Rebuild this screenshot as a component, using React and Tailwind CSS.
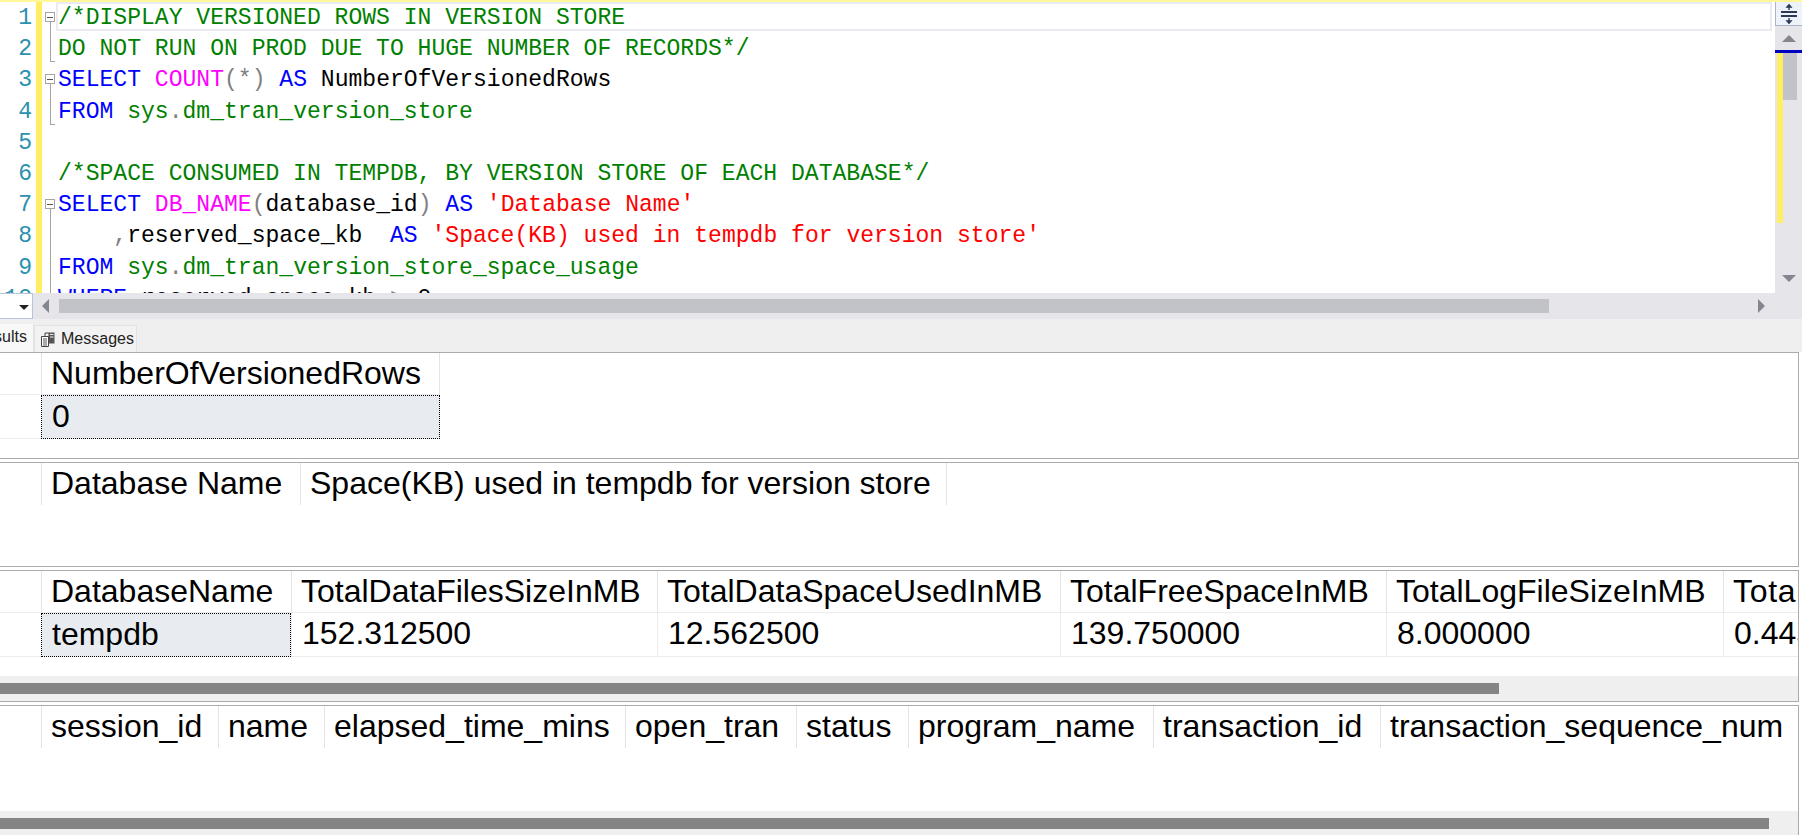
const kw = "text-[#0000ff]";
const cm = "text-[#008000]";
const fn = "text-[#ff00ff]";
const st = "text-[#ff0000]";
const gr = "text-[#808080]";
const bk = "text-black";

const lines = [
  { fold: "box", parts: [["/*DISPLAY VERSIONED ROWS IN VERSION STORE", cm]] },
  { fold: "end", parts: [["DO NOT RUN ON PROD DUE TO HUGE NUMBER OF RECORDS*/", cm]] },
  { fold: "box", parts: [["SELECT", kw], [" ", bk], ["COUNT", fn], ["(*)", gr], [" ", bk], ["AS", kw], [" NumberOfVersionedRows", bk]] },
  { fold: "end", parts: [["FROM", kw], [" ", bk], ["sys", cm], [".", gr], ["dm_tran_version_store", cm]] },
  { fold: null, parts: [] },
  { fold: null, parts: [["/*SPACE CONSUMED IN TEMPDB, BY VERSION STORE OF EACH DATABASE*/", cm]] },
  { fold: "box", parts: [["SELECT", kw], [" ", bk], ["DB_NAME", fn], ["(", gr], ["database_id", bk], [")", gr], [" ", bk], ["AS", kw], [" ", bk], ["'Database Name'", st]] },
  { fold: "line", parts: [["    ", bk], [",", gr], ["reserved_space_kb  ", bk], ["AS", kw], [" ", bk], ["'Space(KB) used in tempdb for version store'", st]] },
  { fold: "line", parts: [["FROM", kw], [" ", bk], ["sys", cm], [".", gr], ["dm_tran_version_store_space_usage", cm]] },
  { fold: "line", parts: [["WHERE", kw], [" reserved_space_kb ", bk], [">", gr], [" 0", bk]] },
];

const panels = [
  {
    h: "h-[107px]",
    cols: [["NumberOfVersionedRows", "w-[399px]"]],
    row: ["0"],
    closed: true,
  },
  {
    h: "h-[105px]",
    cols: [["Database Name", "w-[259px]"], ["Space(KB) used in tempdb for version store", "w-[647px]"]],
    closed: true,
  },
  {
    h: "h-[132px]",
    cols: [
      ["DatabaseName", "w-[250px]"],
      ["TotalDataFilesSizeInMB", "w-[366px]"],
      ["TotalDataSpaceUsedInMB", "w-[403px]"],
      ["TotalFreeSpaceInMB", "w-[326px]"],
      ["TotalLogFileSizeInMB", "w-[337px]"],
      ["TotalLogSpaceUsedInMB", "w-[75px] tracking-[0.7px]"],
    ],
    row: ["tempdb", "152.312500", "12.562500", "139.750000", "8.000000", "0.445312"],
    thumb: "w-[1499px]",
  },
  {
    h: "h-[130px]",
    cols: [
      ["session_id", "w-[177px]"],
      ["name", "w-[106px]"],
      ["elapsed_time_mins", "w-[301px]"],
      ["open_tran", "w-[171px]"],
      ["status", "w-[112px]"],
      ["program_name", "w-[245px]"],
      ["transaction_id", "w-[227px]"],
      ["transaction_sequence_num", "w-[418px]"],
    ],
    thumb: "w-[1769px]",
    last: true,
  },
];

function FoldCell({ type }) {
  if (type === "box") {
    return (
      <div className="relative h-full w-[14px] shrink-0">
        <div className="absolute left-[8px] top-[20px] bottom-0 w-px bg-[#a5a5a5]" />
        <div className="absolute left-[3px] top-[10px] flex h-[10px] w-[10px] items-center justify-center border border-[#a5a5a5] bg-white">
          <div className="h-px w-[6px] bg-[#555555]" />
        </div>
      </div>
    );
  }
  if (type === "end") {
    return (
      <div className="relative h-full w-[14px] shrink-0">
        <div className="absolute left-[8px] top-0 bottom-[2px] w-px bg-[#a5a5a5]" />
        <div className="absolute left-[8px] bottom-[2px] h-px w-[5px] bg-[#a5a5a5]" />
      </div>
    );
  }
  if (type === "line") {
    return (
      <div className="relative h-full w-[14px] shrink-0">
        <div className="absolute left-[8px] top-0 bottom-0 w-px bg-[#a5a5a5]" />
      </div>
    );
  }
  return <div className="w-[14px] shrink-0" />;
}

function Editor() {
  return (
    <div>
      <div className="h-[2px] bg-[#fff799]" />
      <div className="flex h-[291px] overflow-hidden">
        <div className="min-w-0 flex-1 overflow-hidden">
          {lines.map((line, i) => (
            <div key={i} className="flex h-[31.2px] items-stretch">
              <div className="w-[36px] shrink-0 pr-[4px] text-right text-[#2b91af]">{i + 1}</div>
              <div className="w-[6px] shrink-0 bg-[#ffee62]" />
              <FoldCell type={line.fold} />
              <div className={`min-w-0 flex-1 whitespace-pre ${i === 0 ? "mb-[2px] mr-[3px] border-2 border-[#eaeaf2] leading-[28px]" : "pl-[2px]"}`}>
                {line.parts.map(([text, color], j) => (
                  <span key={j} className={color}>{text}</span>
                ))}
              </div>
            </div>
          ))}
        </div>
        <div className="flex w-[27px] shrink-0 flex-col bg-[#e6e6ea]">
          <div className="flex h-[24px] items-center justify-center border-b border-l border-[#a9b4c6] bg-[#eef3fb]">
            <svg width="18" height="22" viewBox="0 0 18 22" fill="none" stroke="#2b3a55">
              <path d="M1 9h16M1 13h16" strokeWidth="1.8" />
              <path d="M9 2v5M9 15v5" strokeWidth="1.4" />
              <path d="M6 4.5 9 1l3 3.5zM6 17.500 9 21l3-3.500z" fill="#2b3a55" strokeWidth="0.6" />
            </svg>
          </div>
          <div className="flex h-[24px] items-center justify-center">
            <div className="h-0 w-0 border-x-[7px] border-b-[7px] border-x-transparent border-b-[#85858f]" />
          </div>
          <div className="h-[3px] bg-[#0000c0]" />
          <div className="flex h-[170px] pl-[2px]">
            <div className="w-[6px] bg-[#ffee62]" />
            <div className="h-[47px] w-[14px] bg-[#c2c3c9]" />
          </div>
          <div className="flex flex-1 items-end justify-center pb-[11px]">
            <div className="h-0 w-0 border-x-[7px] border-t-[7px] border-x-transparent border-t-[#85858f]" />
          </div>
        </div>
      </div>
    </div>
  );
}

function HScroll() {
  return (
    <div className="flex h-[26px] items-center bg-[#e6e6ea]">
      <div className="flex h-full w-[33px] shrink-0 items-center justify-end border-t border-r border-b border-[#b8c4dd] bg-white pr-[3px] pt-[2px]">
        <div className="h-0 w-0 border-x-[5px] border-t-[5px] border-x-transparent border-t-[#222222]" />
      </div>
      <div className="ml-[9px] h-0 w-0 border-y-[7px] border-r-[7px] border-y-transparent border-r-[#85858f]" />
      <div className="ml-[10px] h-[14px] w-[1490px] bg-[#c2c3c9]" />
      <div className="ml-[209px] h-0 w-0 border-y-[7px] border-l-[7px] border-y-transparent border-l-[#85858f]" />
    </div>
  );
}

function Tabs() {
  return (
    <div className="flex h-[33px] items-end bg-[#efefef] text-[16px] text-[#222222]">
      <div className="flex h-[28px] w-[34px] justify-end overflow-hidden border-r border-[#e2e2e2] bg-[#f8f8f8] pr-[6px] pt-[1px]">
        <span>sults</span>
      </div>
      <div className="flex h-[27px] w-[103px] items-center gap-[6px] border-x border-t border-[#e2e2e2] bg-[#f2f2f2] pl-[5px]">
        <svg width="15" height="15" viewBox="0 0 15 15" fill="none" stroke="#444444" className="shrink-0">
          <path d="M1.500 4.500h7v10h-7z" fill="#ffffff" />
          <path d="M3 7h4M3 9h4M3 11h4M3 13h4" strokeWidth="0.9" />
          <path d="M5 4.500V1h4v10" />
          <path d="M9 .5h5.500v11H9z" fill="#555555" stroke="none" />
          <path d="M10 2.500h3.500M10 5h3.500" stroke="#eeeeee" />
        </svg>
        <span className="-mt-[1px]">Messages</span>
      </div>
    </div>
  );
}

function Panel({ panel }) {
  const lineUnder = panel.row ? "border-b border-[#ececec]" : "";
  return (
    <div className={`flex flex-col overflow-hidden border-t border-r border-[#ababab] bg-white ${panel.last ? "" : "border-b"} ${panel.h}`}>
      <div className="flex h-[42px] shrink-0">
        <div className={`w-[41px] shrink-0 ${lineUnder}`} />
        {panel.cols.map(([name, width], i) => (
          <div
            key={name}
            className={`${width} shrink-0 overflow-hidden whitespace-nowrap border-l border-l-[#e3e3e3] pl-[9px] leading-[40px] ${lineUnder} ${
              panel.closed && i === panel.cols.length - 1 ? "border-r border-r-[#e3e3e3]" : ""
            }`}
          >
            {name}
          </div>
        ))}
      </div>
      {panel.row ? (
        <div className="flex h-[44px] shrink-0">
          <div className="w-[41px] shrink-0 border-b border-[#ececec]" />
          {panel.row.map((value, i) => (
            <div
              key={i}
              className={`${panel.cols[i][1].split(" ")[0]} shrink-0 overflow-hidden whitespace-nowrap pl-[10px] ${
                i === 0
                  ? "border border-dotted border-black bg-[#e8ecf0] leading-[40px]"
                  : "border-b border-l border-[#ececec] leading-[41px]"
              }`}
            >
              {value}
            </div>
          ))}
        </div>
      ) : null}
      <div className="flex-1" />
      {panel.thumb ? (
        <div className={`flex shrink-0 items-center bg-[#efefef] ${panel.last ? "h-[24px]" : "h-[25px]"}`}>
          <div className={`h-[11px] bg-[#848484] ${panel.thumb}`} />
        </div>
      ) : null}
    </div>
  );
}

export default function App() {
  return (
    <div className="h-[835px] w-[1802px] overflow-hidden bg-white">
      <div className="font-['Liberation_Mono',monospace] text-[23.05px] leading-[32px]">
        <Editor />
      </div>
      <HScroll />
      <div className="font-['Liberation_Sans',Arial,sans-serif]">
        <Tabs />
        <div className="mr-[3px] flex flex-col gap-[3px] text-[32px] text-black">
          {panels.map((panel, i) => (
            <Panel key={i} panel={panel} />
          ))}
        </div>
      </div>
    </div>
  );
}
